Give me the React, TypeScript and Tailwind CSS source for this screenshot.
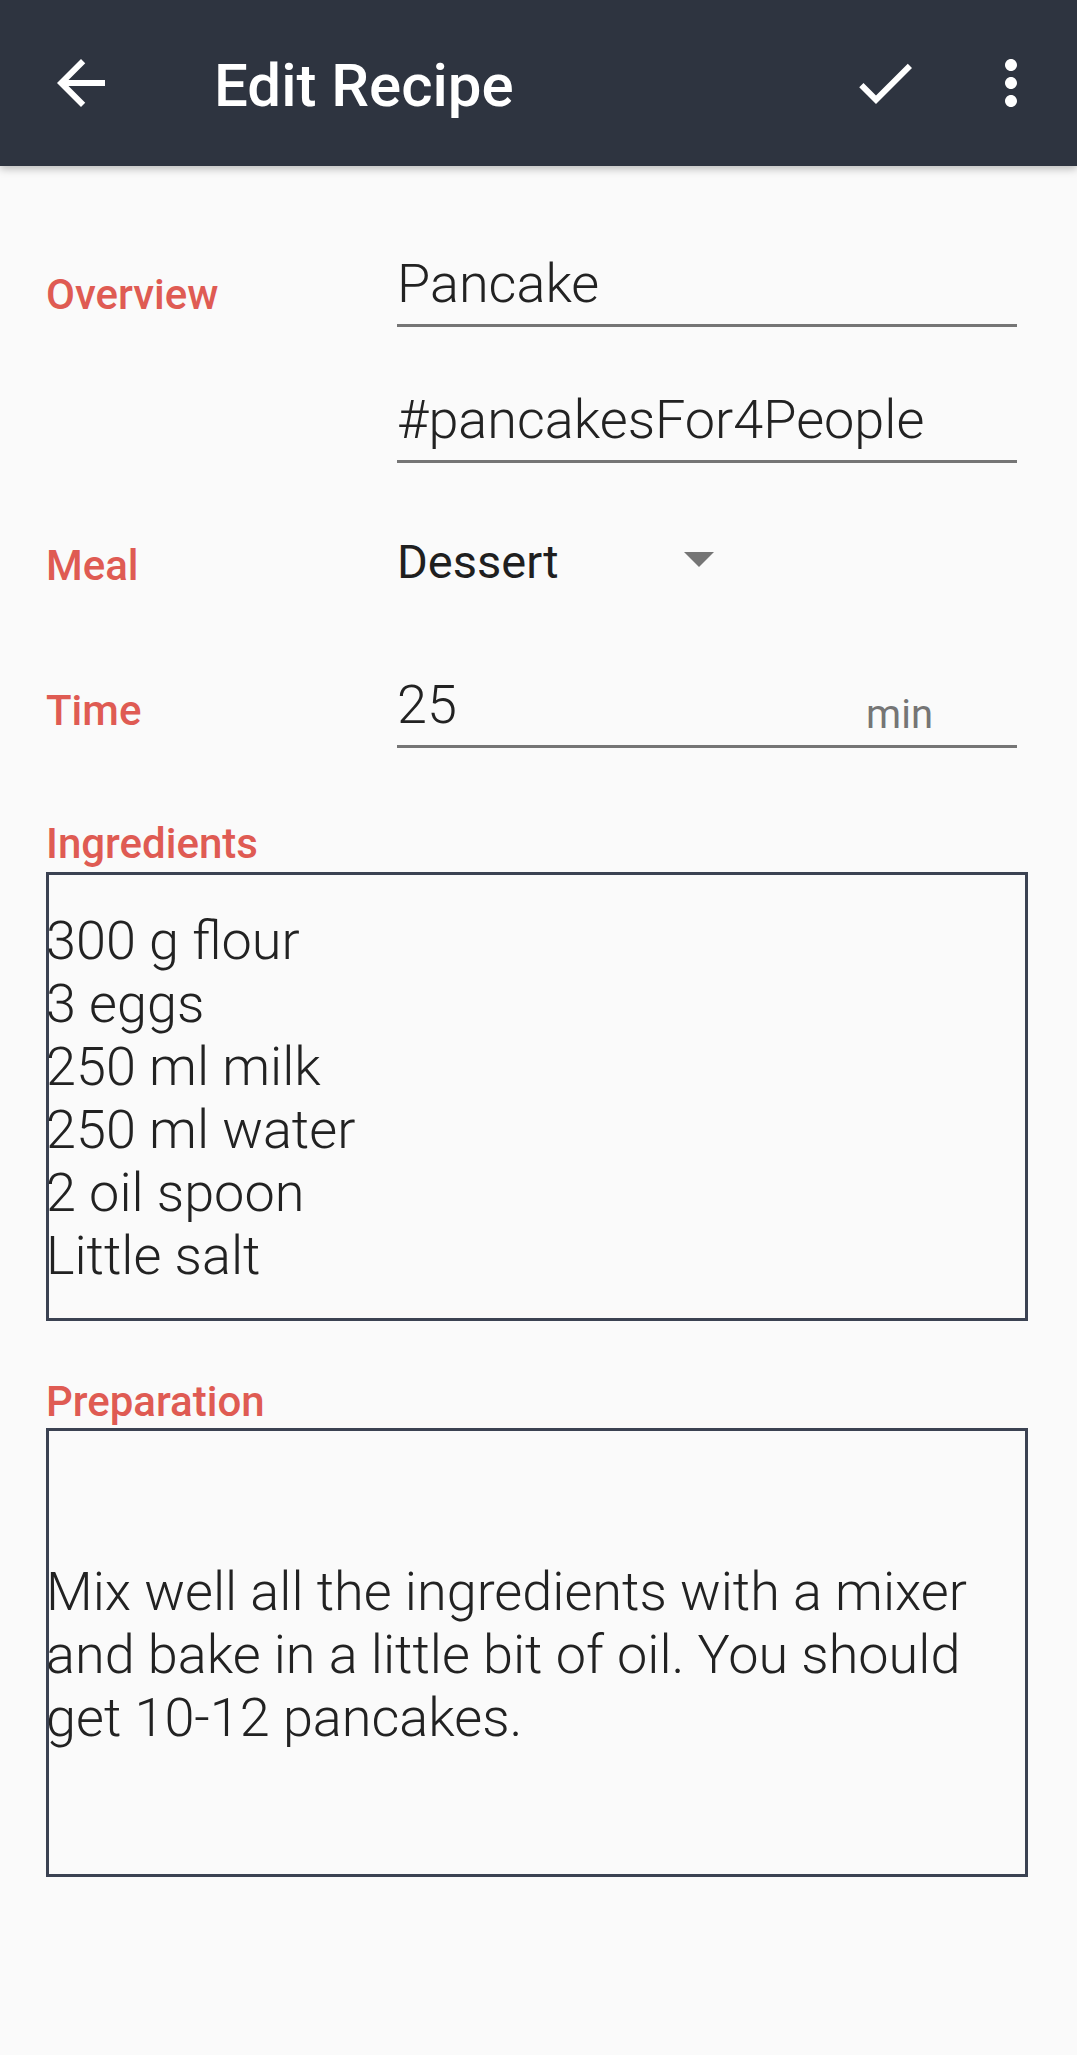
import { MdArrowBack, MdCheck, MdMoreVert } from 'react-icons/md';

const ingredients = ['300 g flour', '3 eggs', '250 ml milk', '250 ml water', '2 oil spoon', 'Little salt'];

const preparation = [
  'Mix well all the ingredients with a mixer',
  'and bake in a little bit of oil. You should',
  'get 10-12 pancakes.',
];

function Label({ children, className = '' }: { children: React.ReactNode; className?: string }) {
  return (
    <div className={`text-[42px] font-medium leading-[46px] text-[#df5b53] ${className}`}>{children}</div>
  );
}

function TextBox({ lines }: { lines: string[] }) {
  return (
    <div className="flex h-[449px] flex-col justify-center border-[3px] border-[#3b4252] pt-[3px]">
      {lines.map((line) => (
        <div key={line} className="-ml-[3px] whitespace-nowrap text-[54px] font-light leading-[63px] text-[#222]">
          {line}
        </div>
      ))}
    </div>
  );
}

export default function App() {
  return (
    <div className="min-h-[2055px] bg-[#fafafa] font-['Roboto','Liberation_Sans',sans-serif]">
      <header className="flex h-[166px] items-start bg-[#2e3440] pt-[47px] text-white shadow-[0_3px_8px_rgba(0,0,0,0.25)]">
        <MdArrowBack className="ml-[45px] size-[72px] shrink-0" />
        <h1 className="ml-[97px] mt-[3px] grow text-[60px] font-medium leading-[72px]">Edit Recipe</h1>
        <MdCheck className="size-[72px] shrink-0" />
        <MdMoreVert className="ml-[54px] mr-[30px] size-[72px] shrink-0" />
      </header>

      <main className="pl-[46px] pr-[49px]">
        {/* Overview */}
        <div className="mt-[86px] flex items-start">
          <Label className="mt-[20px] w-[351px] shrink-0">Overview</Label>
          <div className="w-[620px] border-b-[3px] border-[#757575] pb-2 text-[54px] font-light leading-[64px] text-[#222]">
            Pancake
          </div>
        </div>
        <div className="mt-[61px] flex items-start">
          <div className="w-[351px] shrink-0" />
          <div className="w-[620px] border-b-[3px] border-[#757575] pb-2 text-[54px] font-light leading-[64px] text-[#222]">
            #pancakesFor4People
          </div>
        </div>

        {/* Meal */}
        <div className="mt-[71px] flex items-start">
          <Label className="mt-[9px] w-[351px] shrink-0">Meal</Label>
          <div className="w-[287px] text-[47px] leading-[56px] text-[#1f1f1f]">Dessert</div>
          <svg className="mt-[18px]" width="30" height="15" viewBox="0 0 30 15">
            <polygon points="0,0 30,0 15,15" fill="#757575" />
          </svg>
        </div>

        {/* Time */}
        <div className="mt-[83px] flex items-start">
          <Label className="mt-[15px] w-[351px] shrink-0">Time</Label>
          <div className="flex w-[620px] items-end justify-between border-b-[3px] border-[#757575] pb-2">
            <span className="text-[54px] font-light leading-[64px] text-[#222]">25</span>
            <span className="mb-[2px] mr-[84px] text-[40px] leading-[40px] text-[#757575]">min</span>
          </div>
        </div>

        {/* Ingredients */}
        <Label className="mt-[73px]">Ingredients</Label>
        <div className="mt-[5px]">
          <TextBox lines={ingredients} />
        </div>

        {/* Preparation */}
        <Label className="mt-[58px]">Preparation</Label>
        <div className="mt-[3px]">
          <TextBox lines={preparation} />
        </div>
      </main>
    </div>
  );
}
